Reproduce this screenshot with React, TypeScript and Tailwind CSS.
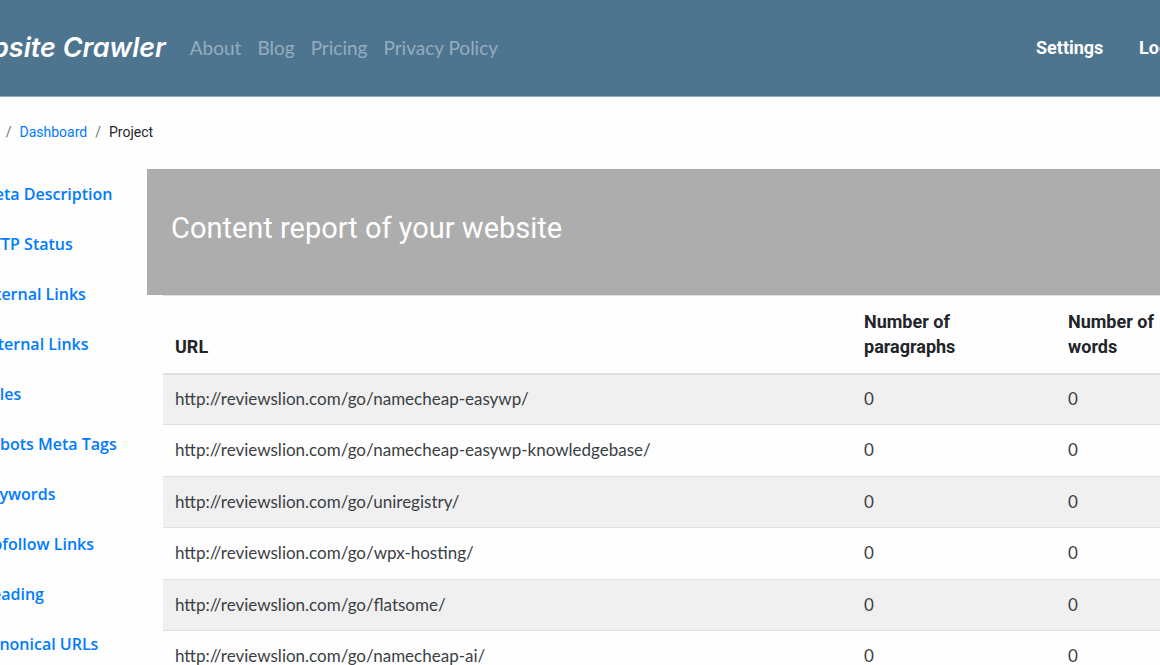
const navLinks = ["About", "Blog", "Pricing", "Privacy Policy"];

const reports = [
  "Meta Description",
  "HTTP Status",
  "Internal Links",
  "External Links",
  "Titles",
  "Robots Meta Tags",
  "Keywords",
  "Nofollow Links",
  "Heading",
  "Canonical URLs",
];

const rows = [
  { url: "http://reviewslion.com/go/namecheap-easywp/", paragraphs: 0, words: 0 },
  { url: "http://reviewslion.com/go/namecheap-easywp-knowledgebase/", paragraphs: 0, words: 0 },
  { url: "http://reviewslion.com/go/uniregistry/", paragraphs: 0, words: 0 },
  { url: "http://reviewslion.com/go/wpx-hosting/", paragraphs: 0, words: 0 },
  { url: "http://reviewslion.com/go/flatsome/", paragraphs: 0, words: 0 },
  { url: "http://reviewslion.com/go/namecheap-ai/", paragraphs: 0, words: 0 },
];

const Navbar = () => (
  <header className="flex items-center h-[97px] -ml-[50px] -mr-[100px] pr-[60px] bg-[#4e7590] border-b border-[#8fa9ba]">
    <a href="#" className="font-['Inter',sans-serif] text-[27px] font-semibold italic text-white whitespace-nowrap">
      Website Crawler
    </a>
    <nav className="flex gap-4 ml-6 font-['Lato',sans-serif] text-[19px] text-[#95acbc] whitespace-nowrap">
      {navLinks.map((link) => (
        <a key={link} href="#">{link}</a>
      ))}
    </nav>
    <nav className="flex gap-8 ml-auto font-['Roboto',sans-serif] text-lg font-bold text-white">
      <a href="#" className="w-[71px]">Settings</a>
      <a href="#" className="w-[61px]">Logout</a>
    </nav>
  </header>
);

const Breadcrumb = () => (
  <nav aria-label="Breadcrumb" className="h-[72px] flex items-center -ml-10 pb-0.5">
    <ol className="flex gap-2 font-['Roboto',sans-serif] text-sm text-[#212529]">
      <li><a href="#" className="text-[#007bff]">Home</a></li>
      <li className="text-[#6c757d]">/</li>
      <li><a href="#" className="text-[#007bff]">Dashboard</a></li>
      <li className="text-[#6c757d]">/</li>
      <li aria-current="page">Project</li>
    </ol>
  </nav>
);

const Sidebar = () => (
  <aside className="w-[167px] -ml-5 shrink-0">
    <ul className="font-['Open_Sans',sans-serif] text-base font-semibold text-[#007bff] whitespace-nowrap">
      {reports.map((report) => (
        <li key={report} className="h-[50px] flex items-center">
          <a href="#">{report}</a>
        </li>
      ))}
    </ul>
  </aside>
);

const ContentTable = () => (
  <table className="w-full table-fixed border-t border-[#dee2e6] text-[#3a3f44]">
    <thead>
      <tr className="h-[78px] border-b-2 border-[#dee2e6] align-bottom text-left font-['Roboto',sans-serif] text-lg leading-[25px] text-[#212529]">
        <th className="px-3 pb-3.5 font-bold">URL</th>
        <th className="w-[204px] px-3 pb-3.5 font-bold">Number of<br />paragraphs</th>
        <th className="w-[204px] px-3 pb-3.5 font-bold">Number of<br />words</th>
      </tr>
    </thead>
    <tbody className="font-['Lato',sans-serif] text-[17px]">
      {rows.map((row) => (
        <tr key={row.url} className="h-[51px] even:h-[52px] odd:bg-[#f0f0f0] border-b border-[#dee2e6]">
          <td className="px-3 pb-px">{row.url}</td>
          <td className="px-3 pb-px">{row.paragraphs}</td>
          <td className="px-3 pb-px">{row.words}</td>
        </tr>
      ))}
    </tbody>
  </table>
);

const App = () => {
  return (
    <div className="h-screen overflow-hidden bg-[#fefefe]">
      <Navbar />
      <Breadcrumb />
      <div className="flex -mr-[100px]">
        <Sidebar />
        <main className="flex-1 min-w-0">
          <div className="h-[126px] px-6 pt-10 bg-[#adadad]">
            <h1 className="font-['Roboto',sans-serif] text-[29px] leading-[38px] text-white">
              Content report of your website
            </h1>
          </div>
          <div className="pl-4">
            <ContentTable />
          </div>
        </main>
      </div>
    </div>
  );
};

export default App;
